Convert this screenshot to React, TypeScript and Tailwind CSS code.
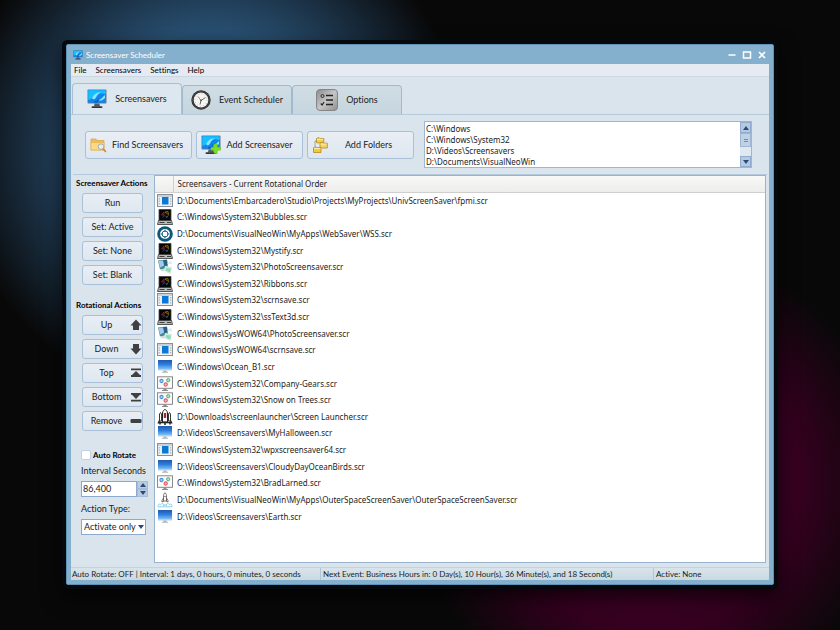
import { useState } from 'react'
import type { ReactNode } from 'react'

type IconKind = 'app' | 'retro' | 'web' | 'photo' | 'screen' | 'gears' | 'shuttle' | 'rocket'

const screensavers: { icon: IconKind; path: string }[] = [
  { icon: 'app', path: 'D:\\Documents\\Embarcadero\\Studio\\Projects\\MyProjects\\UnivScreenSaver\\fpmi.scr' },
  { icon: 'retro', path: 'C:\\Windows\\System32\\Bubbles.scr' },
  { icon: 'web', path: 'D:\\Documents\\VisualNeoWin\\MyApps\\WebSaver\\WSS.scr' },
  { icon: 'retro', path: 'C:\\Windows\\System32\\Mystify.scr' },
  { icon: 'photo', path: 'C:\\Windows\\System32\\PhotoScreensaver.scr' },
  { icon: 'retro', path: 'C:\\Windows\\System32\\Ribbons.scr' },
  { icon: 'app', path: 'C:\\Windows\\System32\\scrnsave.scr' },
  { icon: 'retro', path: 'C:\\Windows\\System32\\ssText3d.scr' },
  { icon: 'photo', path: 'C:\\Windows\\SysWOW64\\PhotoScreensaver.scr' },
  { icon: 'app', path: 'C:\\Windows\\SysWOW64\\scrnsave.scr' },
  { icon: 'screen', path: 'C:\\Windows\\Ocean_B1.scr' },
  { icon: 'gears', path: 'C:\\Windows\\System32\\Company-Gears.scr' },
  { icon: 'gears', path: 'C:\\Windows\\System32\\Snow on Trees.scr' },
  { icon: 'shuttle', path: 'D:\\Downloads\\screenlauncher\\Screen Launcher.scr' },
  { icon: 'screen', path: 'D:\\Videos\\Screensavers\\MyHalloween.scr' },
  { icon: 'app', path: 'C:\\Windows\\System32\\wpxscreensaver64.scr' },
  { icon: 'screen', path: 'D:\\Videos\\Screensavers\\CloudyDayOceanBirds.scr' },
  { icon: 'gears', path: 'C:\\Windows\\System32\\BradLarned.scr' },
  { icon: 'rocket', path: 'D:\\Documents\\VisualNeoWin\\MyApps\\OuterSpaceScreenSaver\\OuterSpaceScreenSaver.scr' },
  { icon: 'screen', path: 'D:\\Videos\\Screensavers\\Earth.scr' },
]

const folders = ['C:\\Windows', 'C:\\Windows\\System32', 'D:\\Videos\\Screensavers', 'D:\\Documents\\VisualNeoWin']

const menus = ['File', 'Screensavers', 'Settings', 'Help']

function MonitorIcon({ plus = false, className }: { plus?: boolean; className?: string }) {
  return (
    <svg viewBox="0 0 20 20" className={className} aria-hidden="true">
      <rect x="0.5" y="0.5" width="19" height="14" rx="0.8" fill="#6d7a88" />
      <rect x="1.3" y="1.3" width="17.4" height="12.4" fill="#0d86ee" />
      <path d="M1.3 1.300h17.400v4C12 3 8 5 5 9c-1 1.500-2.500 2-3.700 1.500z" fill="#14c0ff" />
      <path d="M5 9c2-4 5-6 9-5.500-3 1-4 3-5 5-1 2-3 2.500-4 .5zM11 11c2 0 4-2 7-5v3c-2 2-4 3.500-7 2z" fill="#8de4ff" />
      <path d="M7 12c3 .5 4-1 4.500-4 .5 2 .5 4-1 5.500H7z" fill="#0a5ad0" />
      <path d="M7.500 14.500h5l.5 3h-6z" fill="#555b63" />
      <rect x="4.500" y="17.200" width="11" height="1.800" rx="0.9" fill="#33383f" />
      {plus && <path d="M13.200 9h3v3.200h3.300v3h-3.300v3.300h-3v-3.300H10v-3h3.200z" fill="#7de31a" stroke="#5fbf14" strokeWidth="0.5" />}
    </svg>
  )
}

function ClockIcon() {
  return (
    <svg viewBox="0 0 20 20" className="size-5" aria-hidden="true">
      <circle cx="10" cy="10" r="9.700" fill="#2b2b2b" />
      <circle cx="10" cy="10" r="8.600" fill="none" stroke="#5a5a5a" strokeWidth="0.6" />
      <circle cx="10" cy="10" r="7.400" fill="#f4f4f2" />
      <circle cx="10" cy="10" r="6.200" fill="none" stroke="#8a8a8a" strokeWidth="0.8" strokeDasharray="0.6 2.646" />
      <path d="M7 6.500L10 10.500" stroke="#d94848" strokeWidth="0.8" />
      <path d="M10 10.500L14.500 7.500M10 10.500L9 14.500" stroke="#555" strokeWidth="0.9" />
      <circle cx="10" cy="10.300" r="0.9" fill="#555" />
    </svg>
  )
}

function OptionsIcon() {
  return (
    <svg viewBox="0 0 22 22" className="size-[22px]" aria-hidden="true">
      <defs>
        <linearGradient id="optBg" x1="0" y1="0" x2="1" y2="1">
          <stop offset="0" stopColor="#8a8a8a" />
          <stop offset="0.5" stopColor="#c6c6c6" />
          <stop offset="1" stopColor="#8e8e8e" />
        </linearGradient>
      </defs>
      <rect x="0.500" y="0.500" width="21" height="21" rx="3.500" fill="url(#optBg)" stroke="#858585" />
      <circle cx="6.500" cy="7" r="1.500" fill="none" stroke="#222" strokeWidth="0.9" />
      <path d="M4.800 14.500l1.300 1.500 2-3" fill="none" stroke="#222" strokeWidth="1.200" />
      <path d="M10 6.500h7M10 11h7M10 15.500h7" stroke="#222" strokeWidth="1.300" />
    </svg>
  )
}

function FindFolderIcon() {
  return (
    <svg viewBox="0 0 18 16" className="h-4 w-[18px]" aria-hidden="true">
      <path d="M1 13V2h5l1.200 1.500H14V13z" fill="#f0bd55" stroke="#dda23a" strokeWidth="0.7" />
      <path d="M1 13V5.500h13V13z" fill="#fbd987" stroke="#e3b04c" strokeWidth="0.6" />
      <circle cx="11" cy="9.700" r="2.800" fill="#e2eef4" stroke="#a3afb8" strokeWidth="1" />
      <path d="M13.200 12L15.500 14.500" stroke="#d9822b" strokeWidth="1.600" strokeLinecap="round" />
    </svg>
  )
}

function FoldersIcon() {
  return (
    <svg viewBox="0 0 16 16" className="size-4" aria-hidden="true">
      <g stroke="#a87c14" strokeWidth="0.700">
        <path d="M4.500 5.800v-4.300l2.500-1 .8 1h4v4.300z" fill="#f3cf4c" />
        <path d="M8 11v-4.800l2.500-1 .8 1h4v4.800z" fill="#f6d65c" />
        <path d="M1.500 15.500v-4.800l2.500-1 .8 1H9v4.800z" fill="#f6c93a" />
      </g>
      <path d="M5 2.300h6M8.500 7.100h6M2 11.600h6.500" stroke="#fff4b5" strokeWidth="0.900" />
      <path d="M3 9.500V4h1.300" fill="none" stroke="#777" strokeWidth="0.600" />
    </svg>
  )
}

function ScrIcon({ kind }: { kind: IconKind }) {
  return (
    <svg viewBox="0 0 16 16" className="block size-4" aria-hidden="true">
      {kind === 'app' && (
        <>
          <rect x="0.500" y="1.500" width="15" height="12" fill="#eef1f3" stroke="#8a8f94" />
          <path d="M1 3h14" stroke="#9aa1a7" strokeWidth="0.800" />
          <rect x="5" y="4" width="6.500" height="7.500" fill="#0a78d7" />
          <path d="M2.200 5v6.500M13.700 5v6.500" stroke="#a8b5c0" strokeWidth="1.200" strokeDasharray="1.500 1" />
        </>
      )}
      {kind === 'retro' && (
        <>
          <path d="M2 0.500h12v11H2z" fill="#060606" stroke="#444" strokeWidth="0.800" />
          <path d="M4.500 6l2.500-3v3z" fill="none" stroke="#b22" strokeWidth="0.800" />
          <path d="M8 3l3-.5.5 3z" fill="none" stroke="#a89600" strokeWidth="0.700" />
          <path d="M5.500 8.500l2.500-2 2.500 2.500" fill="none" stroke="#2a3fe0" strokeWidth="0.800" />
          <path d="M9 8.500l2.500-2" stroke="#1fa53a" strokeWidth="0.800" />
          <path d="M1.500 11.500h13l1 4H.5z" fill="#b9b9b9" stroke="#333" strokeWidth="0.800" />
          <path d="M2.500 13.500h5M10 13.500h4" stroke="#333" strokeWidth="0.900" />
        </>
      )}
      {kind === 'web' && (
        <>
          <circle cx="8" cy="8" r="7.800" fill="#0d5878" />
          <circle cx="8" cy="8" r="5" fill="#fff" />
          <circle cx="8" cy="8" r="3" fill="none" stroke="#0d5878" strokeWidth="0.900" />
          <path d="M8 3.500v2.500M8 10v2.500M3.500 8h2.500M10 8h2.500" stroke="#0d5878" strokeWidth="0.900" />
        </>
      )}
      {kind === 'photo' && (
        <>
          <path d="M1 1.500l9-1 1 8.500-8 1.500z" fill="#3f8c8e" />
          <path d="M1.500 2l5-.5.5 5-4 2z" fill="#a5c9ee" />
          <path d="M6 1l4 0 .5 5-3 1z" fill="#2c5f86" />
          <path d="M3 10.500l7-1.500 1 2-6 1.500z" fill="#cfd8dc" />
          <path d="M8 7l7 1-1.500 7L7 12z" fill="#cdeedd" />
          <path d="M9 9l5 .5-1 4-4-2z" fill="#8fd7ba" />
          <path d="M10 4.500l4-3 1 4z" fill="#d9ecf4" />
        </>
      )}
      {kind === 'screen' && (
        <>
          <defs>
            <linearGradient id="scrBlue" x1="0" y1="0" x2="0" y2="1">
              <stop offset="0" stopColor="#2158b0" />
              <stop offset="0.500" stopColor="#2f7edb" />
              <stop offset="1" stopColor="#7cc0f7" />
            </linearGradient>
          </defs>
          <rect x="1" y="1" width="14" height="9" fill="url(#scrBlue)" />
          <path d="M1 10h14v1.500H1z" fill="#c3cdd7" />
          <path d="M6.500 11.500h3v1.300h1.500v1H5v-1h1.500z" fill="#aab4be" />
        </>
      )}
      {kind === 'gears' && (
        <>
          <rect x="0.500" y="0.800" width="15" height="11.500" fill="#fafafa" stroke="#7d7d7d" strokeWidth="0.900" />
          <circle cx="4.500" cy="5" r="1.600" fill="#a9d3f3" stroke="#4a90d9" strokeWidth="1.100" />
          <circle cx="11.200" cy="4.200" r="1.600" fill="#b7e5c8" stroke="#4db079" strokeWidth="1" />
          <circle cx="8.700" cy="8.500" r="1.600" fill="#f8c4c9" stroke="#e25563" strokeWidth="1.100" />
          <path d="M6.500 12.500h3v1.500h1.500v1H5v-1h1.500z" fill="#8b8b8b" />
        </>
      )}
      {kind === 'shuttle' && (
        <>
          <path d="M5.500 13V4C6 1.500 7.200.5 8 .5s2 1 2.500 3.500v9z" fill="#fff" stroke="#222" strokeWidth="1" />
          <path d="M6.800 4h2.400v5H6.800z" fill="#9b2c2c" />
          <path d="M2.500 12V5l1-1.500 1 1.500v7zM11.500 12V5l1-1.500 1 1.500v7z" fill="#fff" stroke="#222" strokeWidth="0.900" />
          <path d="M1 14.500l1.500-3M15 14.500l-1.500-3M2 13.500h12" stroke="#222" strokeWidth="1.300" />
          <path d="M3 15.500v-1.500M8 16v-2.500M13 15.500v-1.500" stroke="#222" strokeWidth="1.500" />
        </>
      )}
      {kind === 'rocket' && (
        <>
          <path d="M6.500 9V3.500C6.800 2 7.500.8 8 .5c.5.300 1.200 1.500 1.500 3V9z" fill="#fff" stroke="#555" strokeWidth="0.800" />
          <path d="M6.500 6L5 8.500V10l2-1M9.500 6L11 8.500V10L9 9" fill="none" stroke="#555" strokeWidth="0.800" />
          <circle cx="8" cy="4.500" r="0.700" fill="#555" />
          <path d="M1 14.500c-.5-2 1.500-3 2.500-2 1-1.500 3-1 3.500.5M15 14.500c.5-2-1.500-3-2.500-2-1-1.500-3-1-3.500.5M1 14.800h14M6 14c.5-1.500 3.500-1.500 4 0" fill="none" stroke="#7ccbe8" strokeWidth="0.900" />
        </>
      )}
    </svg>
  )
}

function RotateIcon({ kind }: { kind: string }) {
  return (
    <svg viewBox="0 0 12 12" className="size-3 shrink-0" fill="#3f4043" aria-hidden="true">
      {kind === 'Up' && <path d="M6 0.500L11.500 6.500H9V11H3V6.500H0.500z" />}
      {kind === 'Down' && <path d="M6 11.500L11.500 5.500H9V1H3V5.500H0.500z" />}
      {kind === 'Top' && <path d="M1 1.500h10v1.800H1zM6 4l4 4h1v2H1V8h1z" />}
      {kind === 'Bottom' && <path d="M1 8.700h10v1.800H1zM1 2h10v1.800h-1L6 8 2 3.800H1z" />}
      {kind === 'Remove' && <rect x="0.500" y="4" width="11" height="4" rx="1" />}
    </svg>
  )
}

function Arrow({ up = false }: { up?: boolean }) {
  return (
    <svg viewBox="0 0 6 4" className="h-1 w-1.5" fill="#2c4a78" aria-hidden="true">
      {up ? <path d="M3 0L6 4H0z" /> : <path d="M3 4L0 0h6z" />}
    </svg>
  )
}

function Tab({ label, icon, active, onClick }: { label: string; icon: ReactNode; active: boolean; onClick: () => void }) {
  return (
    <button
      type="button"
      role="tab"
      aria-selected={active}
      onClick={onClick}
      className={
        active
          ? 'flex h-[31px] w-[110px] items-center justify-center gap-2 rounded-t border border-b-0 border-[#a9bfd5] bg-[#dde7ef]'
          : 'flex h-[29px] w-[110px] items-center justify-center gap-2 rounded-t border border-b-0 border-[#a3bace] bg-linear-to-b from-[#d0dde4] to-[#c6d6de]'
      }
    >
      {icon}
      {label}
    </button>
  )
}

function ToolButton({ label, icon }: { label: string; icon: ReactNode }) {
  return (
    <button
      type="button"
      className="flex h-7 w-[107px] items-center rounded-[3px] border border-[#aabfd8] bg-linear-to-b from-[#e9eef4] to-[#dee7f0] px-1"
    >
      {icon}
      <span className="grow text-center">{label}</span>
    </button>
  )
}

function SideButton({ label, icon }: { label: string; icon?: ReactNode }) {
  return (
    <button
      type="button"
      className="flex h-5 w-[61px] items-center rounded-[3px] border border-[#aabfd8] bg-linear-to-b from-[#e9eef4] to-[#dee7f0]"
    >
      <span className="grow text-center">{label}</span>
      {icon}
    </button>
  )
}

function Sidebar() {
  const [autoRotate, setAutoRotate] = useState(false)
  const [seconds, setSeconds] = useState(86400)

  return (
    <aside className="flex w-[82px] shrink-0 flex-col pl-1">
      <h2 className="mt-0.5 h-4 text-[8px] leading-3 font-bold whitespace-nowrap text-black">Screensaver Actions</h2>
      <div className="flex flex-col gap-1 pl-1.5">
        {['Run', 'Set: Active', 'Set: None', 'Set: Blank'].map((label) => (
          <SideButton key={label} label={label} />
        ))}
      </div>

      <h2 className="mt-3.5 h-4 text-[8px] leading-3 font-bold whitespace-nowrap text-black">Rotational Actions</h2>
      <div className="flex flex-col gap-1 pl-1.5">
        {['Up', 'Down', 'Top', 'Bottom', 'Remove'].map((label) => (
          <SideButton key={label} label={label} icon={<RotateIcon kind={label} />} />
        ))}
      </div>

      <div className="mt-[18px] flex flex-col pl-[5px]">
        <label className="flex h-3 items-center gap-0.5 text-[8px] font-bold text-black">
          <input
            type="checkbox"
            checked={autoRotate}
            onChange={(e) => setAutoRotate(e.target.checked)}
            className="size-2.5 appearance-none rounded-xs border border-[#c3d0df] bg-white checked:bg-[#2c4a78]"
          />
          Auto Rotate
        </label>
        <label htmlFor="interval" className="mt-1 h-3 leading-3">
          Interval Seconds
        </label>
        <div className="mt-1 flex h-4 w-[67px]">
          <input
            id="interval"
            value={seconds.toLocaleString('en-US')}
            onChange={(e) => setSeconds(Number(e.target.value.replace(/\D/g, '')))}
            className="w-[56px] border border-[#8ea9cb] bg-white px-px"
          />
          <div className="flex w-[11px] flex-col">
            <button
              type="button"
              aria-label="Increase"
              onClick={() => setSeconds(seconds + 1)}
              className="flex h-2 items-center justify-center border border-[#a5bdd8] bg-[#b9cde1]"
            >
              <Arrow up />
            </button>
            <button
              type="button"
              aria-label="Decrease"
              onClick={() => setSeconds(Math.max(0, seconds - 1))}
              className="flex h-2 items-center justify-center border border-[#a5bdd8] bg-[#b9cde1]"
            >
              <Arrow />
            </button>
          </div>
        </div>
        <label htmlFor="action" className="mt-1.5 h-3 leading-3">
          Action Type:
        </label>
        <div className="relative mt-1 w-[65px]">
          <select id="action" className="block h-4 w-full appearance-none border border-[#8ea9cb] bg-white pl-0.5">
            <option>Activate only</option>
            <option>Activate and run</option>
          </select>
          <span className="pointer-events-none absolute top-1.5 right-0.5">
            <Arrow />
          </span>
        </div>
      </div>
    </aside>
  )
}

export default function App() {
  const [tab, setTab] = useState('Screensavers')

  return (
    <div className="min-h-screen bg-[#080808] bg-[radial-gradient(circle_at_210px_150px,#2f5f88_0px,#284e70_120px,#080808_255px)] font-[Lato,'Open_Sans',sans-serif] text-[9px] leading-3 text-[#1c1c1c] [font-variant-ligatures:none]">
      <div className="min-h-screen bg-[radial-gradient(circle_at_calc(100%-190px)_calc(100%-150px),#500036_0px,#35001f_150px,transparent_240px)] px-[66px] pt-11 pb-[45px]">
        <div className="flex flex-col rounded-xs border border-[#5f92b5] bg-[#85b0cd] px-1 pb-1 shadow-[0_0_0_4px_#05080c,0_8px_20px_4px_#000000b0]">
          <header className="flex h-[19px] items-center gap-[3px] px-0.5 text-white">
            <MonitorIcon className="size-2.5" />
            <h1 className="grow text-[8px]">Screensaver Scheduler</h1>
            <div className="flex items-center gap-[5px]">
              <button type="button" aria-label="Minimize">
                <svg viewBox="0 0 10 10" className="size-2.5" fill="none" stroke="#fff" strokeWidth="1.500">
                  <path d="M1.500 5h7" />
                </svg>
              </button>
              <button type="button" aria-label="Maximize">
                <svg viewBox="0 0 10 10" className="size-2.5" fill="none" stroke="#fff" strokeWidth="1.500">
                  <rect x="1.500" y="2" width="7" height="6" />
                </svg>
              </button>
              <button type="button" aria-label="Close">
                <svg viewBox="0 0 10 10" className="size-2.5" fill="none" stroke="#fff" strokeWidth="1.600">
                  <path d="M2 2l6 6M8 2L2 8" />
                </svg>
              </button>
            </div>
          </header>

          <div className="bg-[#dae4ec]">
            <nav className="flex h-[13px] items-center gap-[9px] border-b border-[#cbd8e4] bg-[#e6ebf3] px-[3px] text-[8px] text-black">
              {menus.map((menu) => (
                <button key={menu} type="button">
                  {menu}
                </button>
              ))}
            </nav>

            <div role="tablist" className="mt-1.5 flex items-end px-px">
              <Tab label="Screensavers" icon={<MonitorIcon className="size-5" />} active={tab === 'Screensavers'} onClick={() => setTab('Screensavers')} />
              <Tab label="Event Scheduler" icon={<ClockIcon />} active={tab === 'Event Scheduler'} onClick={() => setTab('Event Scheduler')} />
              <Tab label="Options" icon={<OptionsIcon />} active={tab === 'Options'} onClick={() => setTab('Options')} />
            </div>

            <main className="border-t border-[#b7cadb]">
              <div className="mx-0.5 mt-0.5 flex h-[58px] items-center gap-[4px] border-b border-[#b4c9dc] pr-[15px] pb-0.5 pl-3">
                <ToolButton label="Find Screensavers" icon={<FindFolderIcon />} />
                <ToolButton label="Add Screensaver" icon={<MonitorIcon plus className="size-5" />} />
                <ToolButton label="Add Folders" icon={<FoldersIcon />} />
                <div className="ml-1.5 flex h-[47px] grow border border-[#9fb6d3] bg-white">
                  <ul className="grow overflow-hidden pt-px pl-px font-['Noto_Sans',sans-serif] text-[8px] leading-[11px]">
                    {folders.map((folder) => (
                      <li key={folder}>{folder}</li>
                    ))}
                  </ul>
                  <div className="flex w-[11px] flex-col bg-[#e0e8f0]">
                    <button type="button" aria-label="Scroll up" className="flex h-[11px] items-center justify-center border border-[#8fabd0] bg-[#b5cae0]">
                      <Arrow up />
                    </button>
                    <div className="flex h-3.5 flex-col items-center justify-center gap-px border border-[#9fb6d3] bg-[#bfd1e6]">
                      <span className="h-px w-1 bg-[#6d8dba]" />
                      <span className="h-px w-1 bg-[#6d8dba]" />
                    </div>
                    <button type="button" aria-label="Scroll down" className="mt-auto flex h-[11px] items-center justify-center border border-[#8fabd0] bg-[#b5cae0]">
                      <Arrow />
                    </button>
                  </div>
                </div>
              </div>

              <div className="mr-[3px] flex pl-px">
                <Sidebar />
                <div className="h-[388px] grow border border-[#9ab3cc] bg-white">
                  <table className="h-[349px] w-full border-collapse text-left font-['Noto_Sans',sans-serif] text-[8px]">
                    <thead>
                      <tr className="h-4 bg-linear-to-b from-[#f8f8f7] to-[#ededec]">
                        <th className="w-[18px] border-r border-b border-[#cfcfcf] p-0" aria-label="Icon" />
                        <th className="border-b border-[#cfcfcf] p-0 pl-1 font-normal">Screensavers - Current Rotational Order</th>
                      </tr>
                    </thead>
                    <tbody>
                      {screensavers.map((s) => (
                        <tr key={s.path}>
                          <td className="p-0 pl-0.5">
                            <ScrIcon kind={s.icon} />
                          </td>
                          <td className="p-0 pl-1">{s.path}</td>
                        </tr>
                      ))}
                    </tbody>
                  </table>
                </div>
              </div>
            </main>

            <footer className="mt-1 flex h-[13px] items-center border-t border-[#c3d2df] bg-linear-to-b from-[#d9e4ea] to-[#c9dae2] text-[8px]">
              <span className="w-[250px] border-r border-[#b4c6d3] pl-px">Auto Rotate: OFF | Interval: 1 days, 0 hours, 0 minutes, 0 seconds</span>
              <span className="w-[333px] border-r border-[#b4c6d3] pl-0.5">Next Event: Business Hours in: 0 Day(s), 10 Hour(s), 36 Minute(s), and 18 Second(s)</span>
              <span className="grow pl-0.5">Active: None</span>
            </footer>
          </div>
        </div>
      </div>
    </div>
  )
}
